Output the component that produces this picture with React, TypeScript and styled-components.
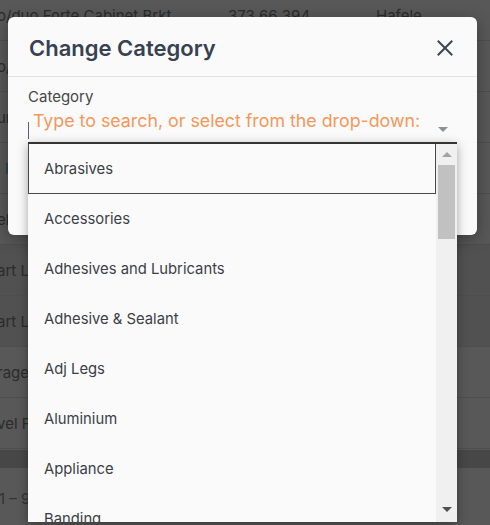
import React from 'react';
import styled, { createGlobalStyle } from 'styled-components';

const GlobalStyle = createGlobalStyle`
	html, body {
		margin: 0;
		padding: 0;
		background: #585858;
	}
	body {
		font-family: Inter, 'Noto Sans', sans-serif;
	}
`;

interface Row {
	name: string;
	code: string;
	brand: string;
	shade?: boolean;
	link?: boolean;
}

const rows: Row[] = [
	{ name: 'o/duo Forte Cabinet Brkt', code: '373 66 394', brand: 'Hafele' },
	{ name: 'o/duo Forte Cabinet Brkt', code: '373 66 395', brand: 'Hafele' },
	{ name: 'ur Hinge Plate', code: '311 98 500', brand: 'Hafele' },
	{ name: 'l Runner Set', code: '420 33 310', brand: 'Hafele', link: true },
	{ name: 'elf Support Pin', code: '282 04 711', brand: 'Hafele' },
	{ name: 'art Lift Mechanism', code: '372 37 010', brand: 'Hafele', shade: true },
	{ name: 'art Lift Cover Cap', code: '372 37 091', brand: 'Hafele', shade: true },
	{ name: 'rage Basket Wire', code: '545 60 200', brand: 'Hafele' },
	{ name: 'vel Foot Adjuster', code: '637 47 300', brand: 'Hafele' },
];

const categories = [
	'Abrasives',
	'Accessories',
	'Adhesives and Lubricants',
	'Adhesive & Sealant',
	'Adj Legs',
	'Aluminium',
	'Appliance',
	'Banding',
];

const App = () => {
	return (
		<Page>
			<GlobalStyle />
			<Table>
				{rows.map((row, i) => (
					<TableRow key={i} shade={row.shade}>
						<NameCell link={row.link}>{row.name}</NameCell>
						<Cell>{row.code}</Cell>
						<Cell>{row.brand}</Cell>
					</TableRow>
				))}
				<FooterBand />
				<Pager>1 – 9 of 9</Pager>
			</Table>

			<Modal>
				<Header>
					<Title>Change Category</Title>
					<CloseButton aria-label="close">
						<svg width="16" height="16" viewBox="0 0 16 16">
							<path d="M1.5 1.5 L14.5 14.5 M14.5 1.5 L1.5 14.5" stroke="#3d4555" strokeWidth="2" strokeLinecap="square" />
						</svg>
					</CloseButton>
				</Header>
				<Body>
					<Label>Category</Label>
					<InputRow>
						<Caret />
						<Placeholder>Type to search, or select from the drop-down:</Placeholder>
						<DropArrow />
					</InputRow>
				</Body>
			</Modal>

			<Listbox>
				<Options>
					{categories.map((c, i) => (
						<Option key={c} active={i === 0}>
							{c}
						</Option>
					))}
				</Options>
				<ScrollTrack>
					<ScrollArrow dir="up" />
					<Thumb />
					<Spacer />
					<ScrollArrow dir="down" />
				</ScrollTrack>
			</Listbox>
		</Page>
	);
};

export default App;

const Page = styled.div`
	position: relative;
	width: 490px;
	height: 525px;
	overflow: hidden;
	background: #585858;
`;

const Table = styled.div`
	display: flex;
	flex-direction: column;
	margin-top: -10px;
`;

const TableRow = styled.div<{ shade?: boolean }>`
	display: grid;
	grid-template-columns: 228px 148px 1fr;
	align-items: center;
	height: 50px;
	border-bottom: 1px solid #4e4e4e;
	background: ${(p) => (p.shade ? '#515151' : '#585858')};
	font-size: 15px;
	color: #2b2b2b;
	white-space: nowrap;
`;

const Cell = styled.div`
	overflow: hidden;
`;

const NameCell = styled(Cell)<{ link?: boolean }>`
	margin-left: -3px;
	color: ${(p) => (p.link ? '#24404f' : '#2b2b2b')};
`;

const FooterBand = styled.div`
	height: 18px;
	margin-top: 1px;
	background: #474747;
`;

const Pager = styled.div`
	padding-top: 21px;
	font-size: 15px;
	color: #333;
	margin-left: -1px;
`;

const Modal = styled.div`
	position: absolute;
	left: 8px;
	top: 17px;
	width: 469px;
	height: 218px;
	background: #fafafa;
	border-radius: 6px;
	box-shadow: 0 4px 16px rgba(0, 0, 0, 0.35);
`;

const Header = styled.div`
	display: flex;
	align-items: center;
	justify-content: space-between;
	height: 59px;
	padding: 0 24px 0 21px;
	border-bottom: 1px solid #e3e3e3;
`;

const Title = styled.h2`
	margin: 0;
	padding-top: 2px;
	font-size: 22px;
	font-weight: 600;
	color: #374151;
`;

const CloseButton = styled.button`
	display: flex;
	padding: 0;
	border: none;
	background: none;
	cursor: pointer;
	margin-top: 2px;
`;

const Body = styled.div`
	display: flex;
	flex-direction: column;
	padding: 10px 29px 0 20px;
`;

const Label = styled.div`
	font-size: 15px;
	color: #474747;
	line-height: 20px;
`;

const InputRow = styled.div`
	display: flex;
	align-items: center;
	height: 30px;
	margin-top: 2px;
`;

const Caret = styled.span`
	width: 1px;
	height: 17px;
	margin-top: 12px;
	background: #5a6070;
`;

const Placeholder = styled.span`
	flex: 1;
	margin-left: 4px;
	margin-top: -7px;
	font-size: 17.8px;
	color: #f4975a;
	white-space: nowrap;
`;

const DropArrow = styled.span`
	width: 0;
	height: 0;
	margin-top: 10px;
	border-left: 5px solid transparent;
	border-right: 5px solid transparent;
	border-top: 5px solid #8c919a;
`;

const Listbox = styled.div`
	position: absolute;
	left: 28px;
	top: 142px;
	width: 429px;
	height: 380px;
	display: flex;
	background: #fafafa;
	border-top: 2px solid #333;
	box-sizing: border-box;
	box-shadow: 0 3px 10px rgba(0, 0, 0, 0.35);
	overflow: hidden;
`;

const Options = styled.ul`
	flex: 1;
	margin: 0;
	padding: 0;
	list-style: none;
`;

const Option = styled.li<{ active?: boolean }>`
	display: flex;
	align-items: center;
	height: 50px;
	box-sizing: border-box;
	padding-left: 15px;
	font-size: 14.8px;
	color: #3a3f47;
	border: 1px solid ${(p) => (p.active ? '#4a4a4a' : 'transparent')};
	border-top: none;
	flex-shrink: 0;
`;

const ScrollTrack = styled.div`
	display: flex;
	flex-direction: column;
	align-items: center;
	width: 21px;
	background: #f0f0f0;
	padding: 8px 0 10px;
	box-sizing: border-box;
`;

const ScrollArrow = styled.span<{ dir: 'up' | 'down' }>`
	width: 0;
	height: 0;
	border-left: 5px solid transparent;
	border-right: 5px solid transparent;
	${(p) =>
		p.dir === 'up'
			? 'border-bottom: 5px solid #a3a3a3;'
			: 'border-top: 5px solid #505050;'}
`;

const Thumb = styled.div`
	width: 17px;
	height: 74px;
	margin-top: 8px;
	background: #c1c1c1;
`;

const Spacer = styled.div`
	flex: 1;
`;
